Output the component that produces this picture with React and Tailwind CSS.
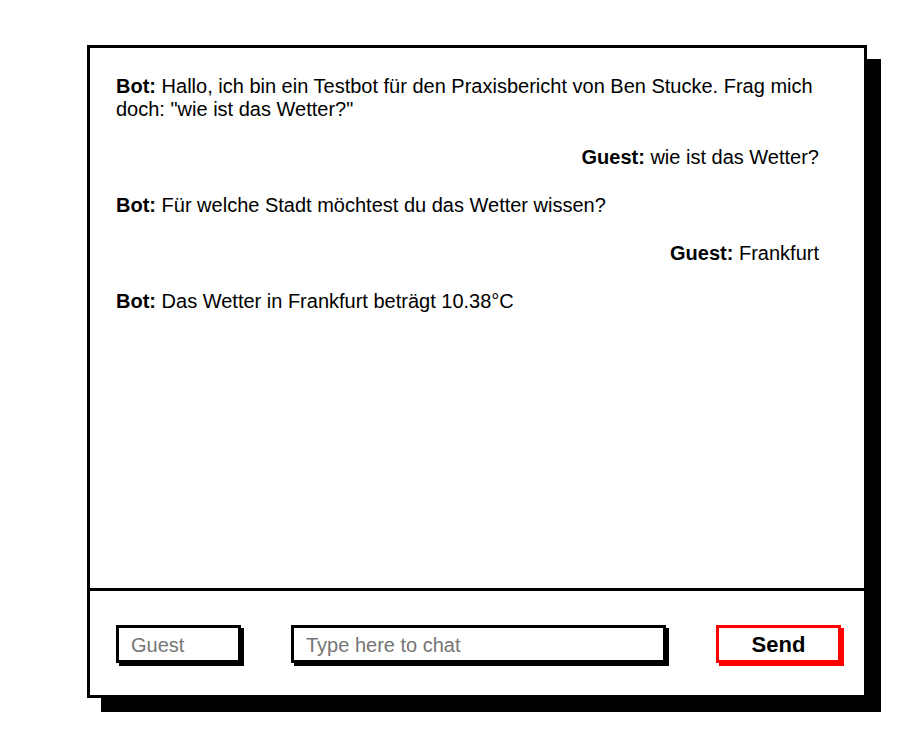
import { useState } from 'react';

const messages = [
    { from: 'Bot', text: 'Hallo, ich bin ein Testbot für den Praxisbericht von Ben Stucke. Frag mich doch: "wie ist das Wetter?"' },
    { from: 'Guest', text: 'wie ist das Wetter?' },
    { from: 'Bot', text: 'Für welche Stadt möchtest du das Wetter wissen?' },
    { from: 'Guest', text: 'Frankfurt' },
    { from: 'Bot', text: 'Das Wetter in Frankfurt beträgt 10.38°C' },
];

export default function App() {
    const [name, setName] = useState('');
    const [text, setText] = useState('');

    return (
        <div className="min-h-screen bg-white pt-[45px] pl-[87px] font-['Liberation_Sans',Arial,sans-serif] text-black">
            {/* chat box */}
            <div className="w-[780px] h-[653px] border-[3px] border-black bg-white shadow-[14px_14px_0_#000] flex flex-col">
                {/* messages */}
                <div className="flex-1 flex flex-col gap-[25px] pt-[27px] pl-[26px] pr-[45px]">
                    {messages.map((m, i) => (
                        <p
                            key={i}
                            className={`text-[20px] leading-[23px] ${m.from === 'Guest' ? 'text-right' : 'text-left'}`}
                        >
                            <b>{m.from}:</b> {m.text}
                        </p>
                    ))}
                </div>

                {/* input bar */}
                <div className="h-[107px] border-t-[3px] border-black flex items-center pl-[26px] pt-[1px]">
                    <input
                        value={name}
                        onChange={(e) => setName(e.target.value)}
                        placeholder="Guest"
                        className="w-[125px] h-[38px] border-[3px] border-black shadow-[3px_3px_0_#000] px-3 pt-[3px] text-[20px] outline-none placeholder:text-[#757575]"
                    />
                    <input
                        autoFocus
                        value={text}
                        onChange={(e) => setText(e.target.value)}
                        placeholder="Type here to chat"
                        className="ml-[50px] w-[375px] h-[38px] border-[3px] border-black shadow-[3px_3px_0_#000] px-3 pt-[3px] text-[20px] outline-none placeholder:text-[#757575]"
                    />
                    <button
                        type="button"
                        className="ml-[50px] w-[125px] h-[38px] border-[3px] border-[#ff0000] shadow-[3px_3px_0_#ff0000] bg-white text-[22px] font-bold"
                    >
                        Send
                    </button>
                </div>
            </div>
        </div>
    );
}
